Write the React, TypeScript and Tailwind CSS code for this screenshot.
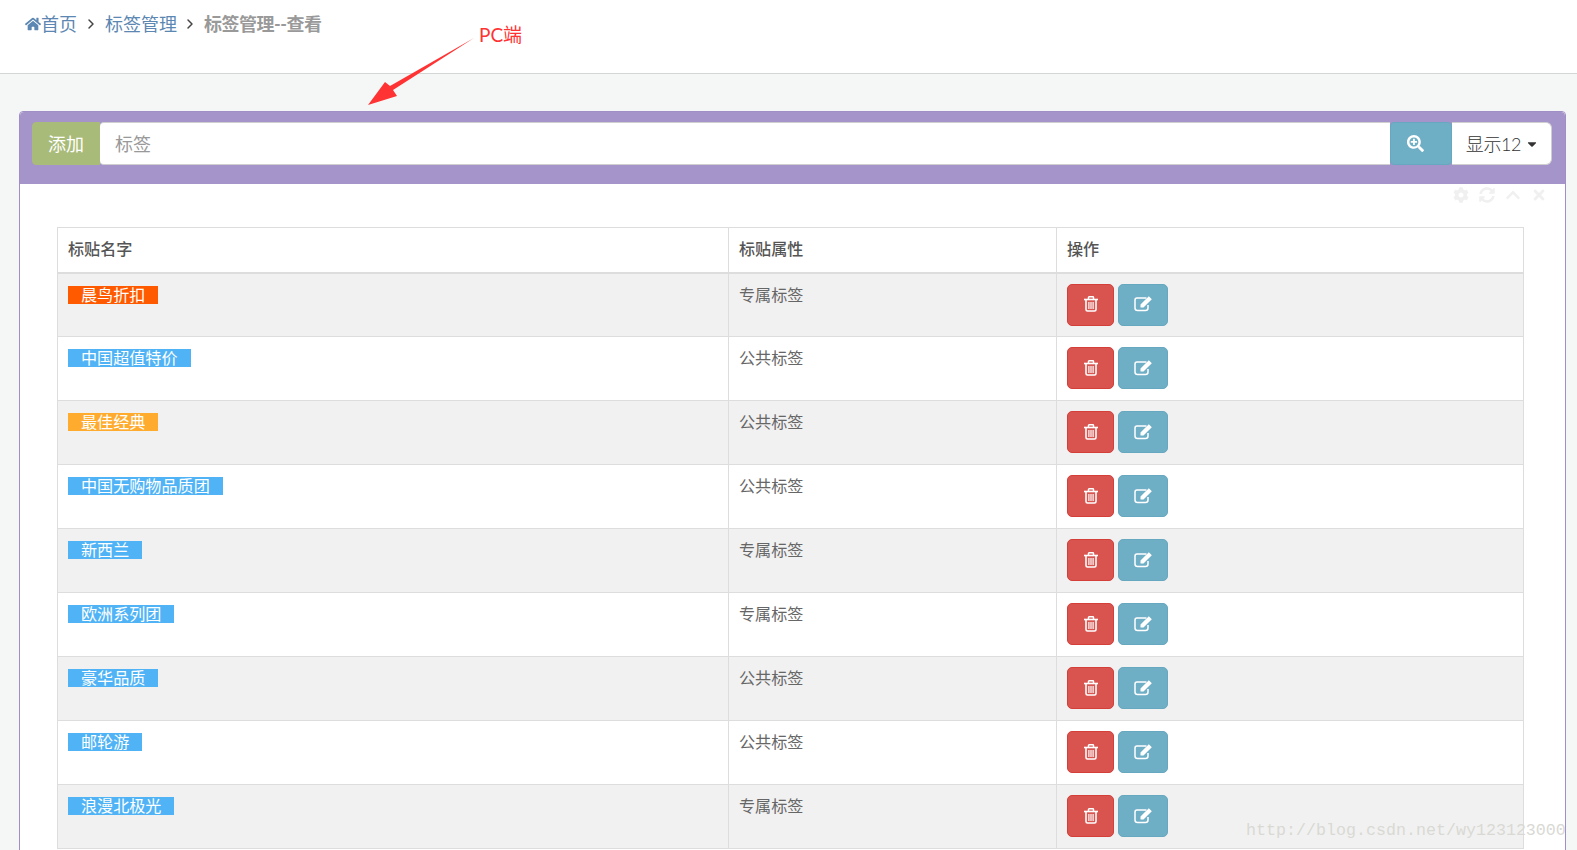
import { FaHome, FaSearchPlus, FaCaretDown, FaCog, FaSyncAlt, FaChevronUp, FaTimes } from "react-icons/fa";
import { ChevronRight } from "lucide-react";

const rows = [
    { name: "晨鸟折扣", color: "bg-[#ff5a00]", type: "专属标签" },
    { name: "中国超值特价", color: "bg-[#4fb3f6]", type: "公共标签" },
    { name: "最佳经典", color: "bg-[#ffab2e]", type: "公共标签" },
    { name: "中国无购物品质团", color: "bg-[#4fb3f6]", type: "公共标签" },
    { name: "新西兰", color: "bg-[#4fb3f6]", type: "专属标签" },
    { name: "欧洲系列团", color: "bg-[#4fb3f6]", type: "专属标签" },
    { name: "豪华品质", color: "bg-[#4fb3f6]", type: "公共标签" },
    { name: "邮轮游", color: "bg-[#4fb3f6]", type: "公共标签" },
    { name: "浪漫北极光", color: "bg-[#4fb3f6]", type: "专属标签" },
];

function TrashIcon() {
    return (
        <svg width="14" height="16" viewBox="0 0 14 16" fill="none" stroke="white">
            <path d="M0 3.5 H14" strokeWidth="1.6" />
            <path d="M4.5 3 V1.5 Q4.5 .8 5.2 .8 H8.8 Q9.5 .8 9.5 1.5 V3" strokeWidth="1.5" />
            <path d="M2 4 V13.5 Q2 15 3.5 15 H10.5 Q12 15 12 13.5 V4" strokeWidth="1.6" />
            <path d="M4.9 6 V13 M7 6 V13 M9.1 6 V13" strokeWidth="1.2" />
        </svg>
    );
}

function EditIcon() {
    return (
        <svg width="19" height="17" viewBox="0 0 19 17" fill="none">
            <path d="M12.5 3 H3 Q1 3 1 5 V13 Q1 15.5 3.5 15.5 H11.5 Q14 15.5 14 13 V10" stroke="white" strokeWidth="1.5" />
            <path d="M6.5 9.5 L14.8 1.2 L17.8 4.2 L9.5 12.5 L6.5 12.5 Z" fill="white" />
        </svg>
    );
}

function Breadcrumb() {
    return (
        <div className="h-[74px] bg-white border-b border-[#d4d6d5] pl-[25px] pt-[11px]">
            <div className="flex items-center h-[26px] text-[18px] leading-[26px]">
                <FaHome className="w-[16px] h-[16px] text-[#5b87b2]" />
                <span className="text-[#5b87b2]">首页</span>
                <ChevronRight className="w-[16px] h-[16px] text-[#444] ml-[6px] mr-[6px]" strokeWidth={2.2} />
                <span className="text-[#5b87b2]">标签管理</span>
                <ChevronRight className="w-[16px] h-[16px] text-[#444] ml-[5px] mr-[6px]" strokeWidth={2.2} />
                <span className="text-[#999] font-bold tracking-[-0.5px]">标签管理--查看</span>
            </div>
        </div>
    );
}

function SearchBar() {
    return (
        <div className="bg-[#a594ca] pl-[12px] pr-[13px] pt-[10px] pb-[19px] rounded-t-[4px]">
            <div className="flex h-[43px] text-[18px]">
                <button className="w-[68px] pt-[2px] bg-[#a9bb78] text-white rounded-l-[4px] border border-[#a9bb78]">添加</button>
                <input
                    readOnly
                    placeholder="标签"
                    className="flex-1 min-w-0 pt-[2px] bg-white border-y border-[#cfcfcf] rounded-l-[4px] px-[15px] outline-none placeholder:text-[#999]"
                />
                <button className="w-[62px] flex items-center justify-center pr-[12px] bg-[#6fafc6] border border-[#66a8bf] rounded-[4px]">
                    <FaSearchPlus className="w-[17px] h-[17px] text-white" />
                </button>
                <button className="w-[100px] flex items-center justify-center gap-[4px] pl-[2px] pt-[1px] bg-white border-y border-r border-[#cfcfcf] rounded-r-[6px] text-[#333]">
                    <span className="font-light tracking-[-0.4px]">显示12</span>
                    <FaCaretDown className="w-[14px] h-[14px] text-[#333]" />
                </button>
            </div>
        </div>
    );
}

function DataTable() {
    return (
        <table className="w-[1466px] table-fixed border-collapse text-[16.1px]">
            <colgroup>
                <col className="w-[671px]" />
                <col className="w-[328px]" />
                <col className="w-[467px]" />
            </colgroup>
            <thead>
                <tr className="h-[45px] text-left text-[#555] border-b-2 border-[#dddddd]">
                    <th className="border border-b-2 border-[#dddddd] px-[10px] pb-[2px] font-medium">标贴名字</th>
                    <th className="border border-b-2 border-[#dddddd] px-[10px] pb-[2px] font-medium">标贴属性</th>
                    <th className="border border-b-2 border-[#dddddd] px-[10px] pb-[2px] font-medium">操作</th>
                </tr>
            </thead>
            <tbody>
                {rows.map((row) => (
                    <tr key={row.name} className="h-[64px] text-[#666] odd:bg-[#f1f1f1]">
                        <td className="border border-[#dddddd] px-[10px] pt-[12px] align-top">
                            <span className={`block w-fit h-[18px] leading-[18px] px-[13px] text-white ${row.color}`}>{row.name}</span>
                        </td>
                        <td className="border border-[#dddddd] px-[10px] pt-[9px] align-top leading-[23px]">{row.type}</td>
                        <td className="border border-[#dddddd] px-[10px] align-top pt-[10px]">
                            <div className="flex gap-[4px]">
                                <button className="w-[47px] h-[42px] flex items-center justify-center pb-[1px] bg-[#d9534f] border border-[#d43f3a] rounded-[5px]">
                                    <TrashIcon />
                                </button>
                                <button className="w-[50px] h-[42px] flex items-center justify-center pb-[2px] bg-[#6fafc6] border border-[#66a8bf] rounded-[5px]">
                                    <EditIcon />
                                </button>
                            </div>
                        </td>
                    </tr>
                ))}
            </tbody>
        </table>
    );
}

export default function App() {
    return (
        <div className="relative h-[850px] overflow-hidden bg-[#f5f7f6] font-['Lato','Noto_Sans_CJK_SC',sans-serif]">
            <Breadcrumb />

            {/* PC端 annotation */}
            <svg className="absolute left-[360px] top-[30px]" width="120" height="85" viewBox="0 0 120 85">
                <path d="M114 8 L33 60 L37 66 L8 75 L25 52 L30 56 Z" fill="#f33" />
            </svg>
            <span className="absolute left-[479px] top-[21px] text-[19px] leading-[28px] text-[#f33]">PC端</span>

            <div className="ml-[19px] mr-[11px] mt-[37px] border border-[#a08ec6] rounded-t-[4px] bg-white h-[800px]">
                <SearchBar />
                <div className="pl-[37px]">
                    <div className="flex justify-end gap-[10px] pr-[18px] pt-[3px] h-[43px] text-[#f0f0f0]">
                        <FaCog className="w-[16px] h-[16px]" />
                        <FaSyncAlt className="w-[16px] h-[16px]" />
                        <FaChevronUp className="w-[16px] h-[16px]" />
                        <FaTimes className="w-[16px] h-[16px]" />
                    </div>
                    <DataTable />
                </div>
            </div>

            {/* blog watermark */}
            <span className="absolute left-[1246px] top-[821px] font-['Liberation_Mono',monospace] text-[16.67px] leading-[20px] text-[#d9d9d4] whitespace-nowrap">
                http://blog.csdn.net/wy123123000
            </span>
        </div>
    );
}
